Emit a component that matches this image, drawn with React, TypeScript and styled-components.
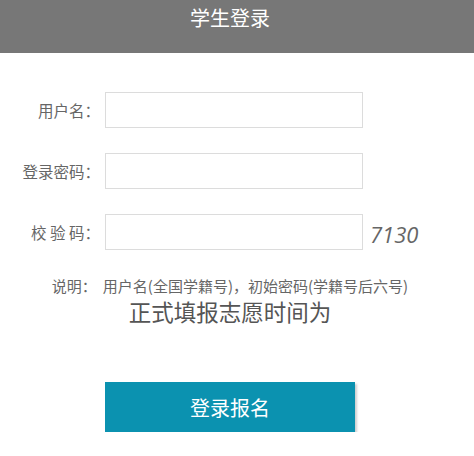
import styled, { createGlobalStyle } from "styled-components";

const GlobalStyle = createGlobalStyle`
  html, body {
    margin: 0;
    padding: 0;
    background: #fff;
    font-family: "Noto Sans CJK SC", "Noto Sans", sans-serif;
  }
`;

const fields = [
  { label: "用户名：", type: "text" },
  { label: "登录密码：", type: "password" },
  { label: "校 验 码：", type: "text", code: "7130" },
];

function App() {
  return (
    <>
      <GlobalStyle />
      <Header>
        <HeaderTitle>学生登录</HeaderTitle>
      </Header>
      <Page>
        <Form>
          {fields.map((f) => (
            <Row key={f.label}>
              <Label>{f.label}</Label>
              <Input type={f.type} />
              {f.code && <Code>{f.code}</Code>}
            </Row>
          ))}
        </Form>
        <Note>
          说明：<NoteGap />用户名(全国学籍号)，初始密码(学籍号后六号)
        </Note>
        <Notice>正式填报志愿时间为</Notice>
        <ButtonRow>
          <Submit>登录报名</Submit>
        </ButtonRow>
      </Page>
    </>
  );
}

export default App;

const Header = styled.div`
  height: 53px;
  background: #777777;
`;

const HeaderTitle = styled.div`
  width: 460px;
  text-align: center;
  color: #fff;
  font-size: 20px;
  line-height: 35px;
`;

const Page = styled.div`
  width: 460px;
  padding-top: 39px;
`;

const Form = styled.div`
  display: flex;
  flex-direction: column;
  gap: 25px;
`;

const Row = styled.div`
  display: flex;
  align-items: center;
  height: 36px;
`;

const Label = styled.label`
  flex: 0 0 105px;
  padding-right: 5px;
  box-sizing: border-box;
  text-align: right;
  color: #666;
  font-size: 15.5px;
  white-space: pre;
`;

const Input = styled.input`
  flex: 0 0 258px;
  width: 258px;
  height: 36px;
  box-sizing: border-box;
  border: 1px solid #dcdcdc;
  outline: none;
  padding: 0 8px;
`;

const Code = styled.span`
  margin-left: 7px;
  margin-top: 4px;
  font-family: "Open Sans", "DejaVu Sans", sans-serif;
  font-style: italic;
  font-size: 22px;
  color: #666;
`;

const Note = styled.div`
  margin-top: 27px;
  text-align: center;
  color: #666;
  font-size: 15px;
  line-height: 18px;
`;

const NoteGap = styled.span`
  display: inline-block;
  width: 6px;
`;

const Notice = styled.div`
  margin-top: 1px;
  text-align: center;
  color: #555;
  font-size: 22.5px;
  line-height: 30px;
`;

const ButtonRow = styled.div`
  padding-top: 56px;
  padding-left: 105px;
`;

const Submit = styled.button`
  width: 250px;
  height: 50px;
  border: 0;
  background: #0b92b0;
  color: #fff;
  font-family: "Noto Sans CJK SC", sans-serif;
  font-size: 20px;
  box-shadow: 2px 2px 2px #d0d0d0;
  cursor: pointer;
`;
